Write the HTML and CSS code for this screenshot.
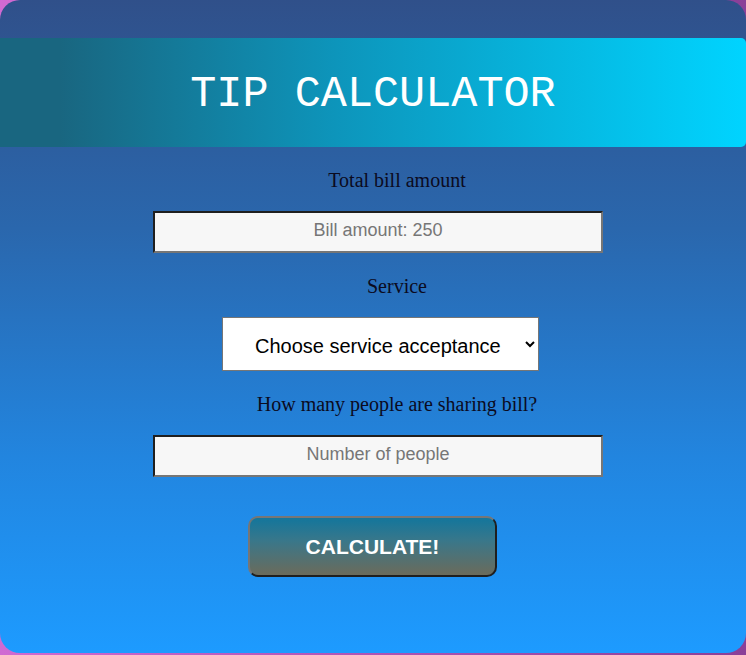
FILE: index.html
```html
<!DOCTYPE html>
<html>
<head>
<meta charset="utf-8">
<title>Tip Calculator</title>
<link rel="stylesheet" href="styles.css">
</head>
<body>
<div class="card">
  <header class="banner">
    <h1 class="title">TIP CALCULATOR</h1>
  </header>
  <form class="form">
    <label class="label" for="bill">Total bill amount</label>
    <input class="field" id="bill" type="text" placeholder="Bill amount: 250">
    <label class="label" for="service">Service</label>
    <select class="select" id="service">
      <option>Choose service acceptance</option>
      <option>30% - Outstanding</option>
      <option>20% - Good</option>
      <option>15% - It was OK</option>
      <option>10% - Bad</option>
    </select>
    <label class="label" for="people">How many people are sharing bill?</label>
    <input class="field" id="people" type="text" placeholder="Number of people">
    <button class="calc" type="button">CALCULATE!</button>
  </form>
</div>
</body>
</html>
```
FILE: styles.css
```css
html, body {
  margin: 0;
  padding: 0;
}
body {
  width: 746px;
  height: 655px;
  background: linear-gradient(to right, #d06ad2, #8a3f98);
  font-family: "Liberation Serif", "Times New Roman", serif;
  overflow: hidden;
}
.card {
  box-sizing: border-box;
  width: 746px;
  height: 653px;
  border-radius: 20px;
  background: linear-gradient(to bottom, #30508a 0%, #2a67ad 35%, #2285df 70%, #1d9bff 100%);
  padding-top: 38px;
  overflow: hidden;
}
.banner {
  height: 109px;
  background: linear-gradient(to right, #196680 8%, #0d95bb 45%, #00d4ff 100%);
  border-radius: 0 5px 5px 0;
  display: flex;
  align-items: center;
  justify-content: center;
}
.title {
  margin: 0;
  font-family: "Liberation Mono", "Courier New", monospace;
  font-weight: normal;
  font-size: 43.5px;
  color: #ffffff;
  line-height: 1;
  position: relative;
  top: 2px;
}
.form {
  display: flex;
  flex-direction: column;
  align-items: center;
  padding-left: 10px;
}
.label {
  display: block;
  margin-top: 22px;
  height: 22px;
  line-height: 22px;
  font-size: 20px;
  color: #0b0b1e;
  padding-left: 38px;
}
.field {
  box-sizing: border-box;
  margin-top: 20px;
  width: 450px;
  height: 42px;
  background: #f7f7f7;
  border-style: solid;
  border-width: 2px;
  border-color: #1f1f1f #767676 #767676 #1f1f1f;
  font-family: "Liberation Sans", Arial, sans-serif;
  font-size: 18px;
  text-align: center;
  padding: 0 4px 3px;
  color: #222;
}
.field::placeholder {
  color: #767676;
}
.select {
  box-sizing: border-box;
  margin-top: 20px;
  width: 317px;
  height: 54px;
  margin-left: 5px;
  background: #ffffff;
  border: 1px solid #767676;
  border-radius: 0;
  font-family: "Liberation Sans", Arial, sans-serif;
  font-size: 20px;
  color: #000;
  padding: 3px 12px 0 28px;
}
.calc {
  box-sizing: border-box;
  margin-top: 39px;
  margin-right: 11px;
  width: 249px;
  height: 61px;
  border-radius: 10px;
  border-style: solid;
  border-width: 2px;
  border-color: #767676 #1f1f1f #1f1f1f #767676;
  background: linear-gradient(to bottom, #13769c, #39778a 40%, #6b6b5b);
  color: #ffffff;
  font-family: "Liberation Sans", Arial, sans-serif;
  font-weight: bold;
  font-size: 21px;
  cursor: pointer;
}
```
